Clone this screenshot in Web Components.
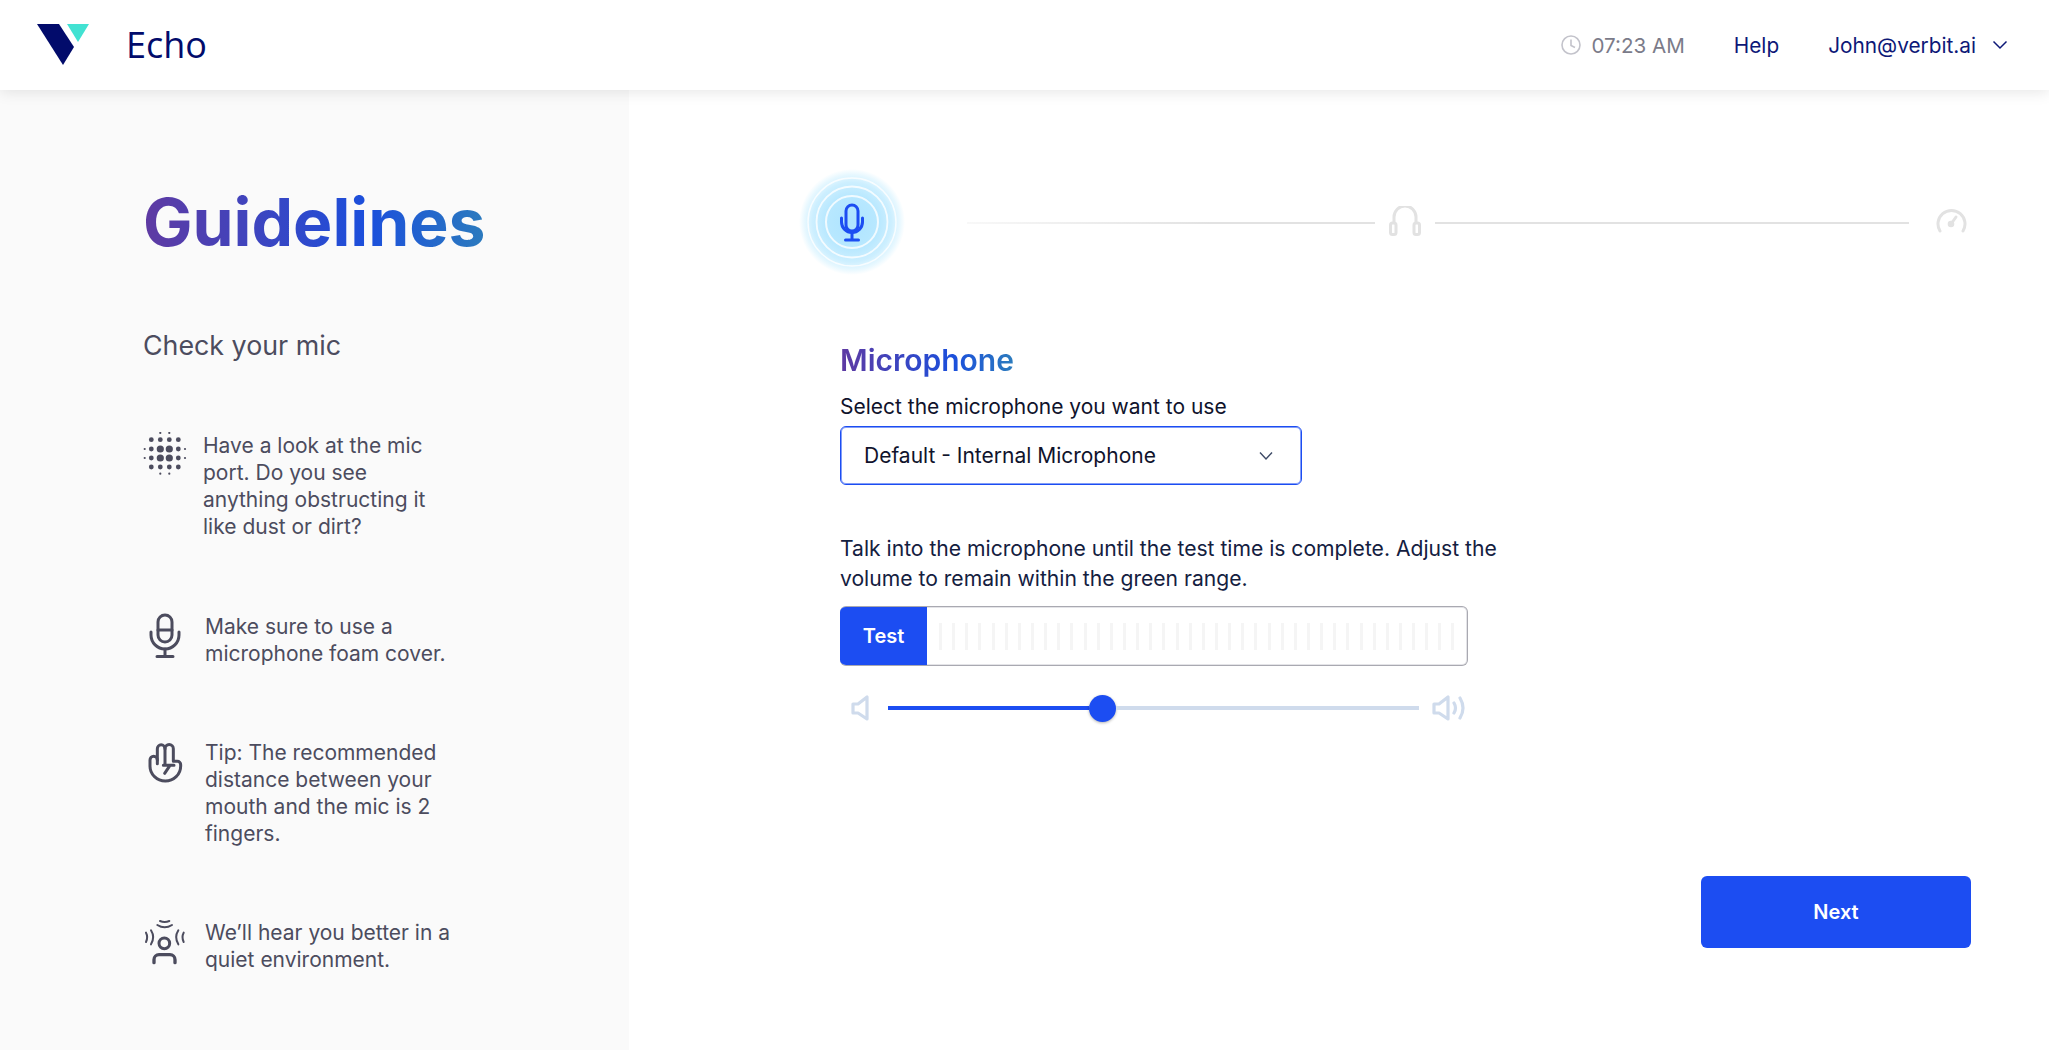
<!DOCTYPE html>
<html lang="en">
<head>
<meta charset="utf-8">
<title>Echo</title>
<style>
html, body { margin: 0; height: 100%; }
body { font-family: Inter, "Liberation Sans", sans-serif; background: #fff; overflow: hidden; }
.main { display: flex; height: 960px; }
</style>
</head>
<body>
<app-header></app-header>
<div class="main">
  <guide-sidebar>
    <guide-item text-left="60">
      <svg slot="icon" width="48" height="48" viewBox="0 0 48 48" fill="#4c4c5e">
        <circle cx="17.3" cy="1" r="1.1"/><circle cx="26.3" cy="1" r="1.1"/>
        <circle cx="8.3" cy="7.7" r="2.4"/><circle cx="17.3" cy="7.7" r="2.4"/><circle cx="26.3" cy="7.7" r="2.4"/><circle cx="35.3" cy="7.7" r="2.4"/>
        <circle cx="1.7" cy="17" r="1.1"/><circle cx="8.3" cy="17" r="2.4"/><circle cx="17.3" cy="17" r="3.6"/><circle cx="26.3" cy="17" r="3.6"/><circle cx="35.3" cy="17" r="2.4"/><circle cx="42" cy="17" r="1.1"/>
        <circle cx="1.7" cy="26" r="1.1"/><circle cx="8.3" cy="26" r="2.4"/><circle cx="17.3" cy="26" r="3.6"/><circle cx="26.3" cy="26" r="3.6"/><circle cx="35.3" cy="26" r="2.4"/><circle cx="42" cy="26" r="1.1"/>
        <circle cx="8.3" cy="35" r="2.4"/><circle cx="17.3" cy="35" r="2.4"/><circle cx="26.3" cy="35" r="2.4"/><circle cx="35.3" cy="35" r="2.4"/>
        <circle cx="17.3" cy="41.7" r="1.1"/><circle cx="26.3" cy="41.7" r="1.1"/>
      </svg>
      Have a look at the mic port. Do you see anything obstructing it like dust or dirt?
    </guide-item>
    <guide-item style="margin-top:1px">
      <svg slot="icon" width="48" height="48" viewBox="0 0 48 48" fill="none" stroke="#4c4c5e" stroke-width="3" stroke-linecap="round">
        <rect x="15" y="2" width="14" height="27" rx="7"/>
        <path d="M15 17h14"/>
        <path d="M8 19v3a14 14 0 0 0 28 0v-3"/>
        <path d="M22 36v7M14 43.5h16"/>
      </svg>
      Make sure to use a microphone foam cover.
    </guide-item>
    <guide-item>
      <svg slot="icon" width="48" height="48" viewBox="39 21 144 144" fill="none" stroke="#4c4c5e" stroke-width="9" stroke-linecap="round" stroke-linejoin="round">
        <path d="M82 95V50a11.5 11.5 0 0 1 23 0V95"/>
        <path d="M105 50a12.5 12.5 0 0 1 25 0V88H142a10 10 0 0 1 10 10V103a46 44 0 0 1-92 0V84a11 11 0 0 1 22 0"/>
        <path d="M100 100H132M120 100L104 124"/>
      </svg>
      Tip: The recommended distance between your mouth and the mic is 2 fingers.
    </guide-item>
    <guide-item>
      <svg slot="icon" width="48" height="48" viewBox="39 24 144 144" fill="none" stroke="#4c4c5e" stroke-linecap="round">
        <circle cx="103" cy="97" r="16" stroke-width="9"/>
        <path d="M72 155V146a15 15 0 0 1 15-15H120a15 15 0 0 1 15 15V155" stroke-width="10"/>
        <path d="M90 30q14 6 28 0M82 42q22 14 44 0M48 65q7 13 0 28M63 58q13 21 0 42M145 58q-13 21 0 42M161 65q-7 13 0 28" stroke-width="6"/>
      </svg>
      We’ll hear you better in a quiet environment.
    </guide-item>
  </guide-sidebar>
  <mic-panel></mic-panel>
</div>

<script>
var gradient = "linear-gradient(90deg, #5f3aa2 0%, #1b4fdc 65%, #2c7cbd 100%)";

//HEADER
var template_header = document.createElement("template");
template_header.innerHTML = `
<style>
:host{
    display: flex;
    align-items: center;
    height: 90px;
    background: #fff;
    box-shadow: 0 2px 14px rgba(0,0,0,.1);
    position: relative;
    z-index: 2;
    padding: 0 41px 0 37px;
    font-size: 20.8px;
}
.logo{ display: block; margin-right: 37px; margin-bottom: 1px; }
.name{ font-family: "Open Sans", sans-serif; font-size: 36px; color: #020b6b; flex: 1; margin-bottom: 2px; }
.time{ color: #7b7b89; display: flex; align-items: center; gap: 10px; margin-right: 49px; font-size: 20.6px; }
a{ color: #0d1877; text-decoration: none; }
.help{ margin-right: 49px; }
.chev{ margin-left: 16px; }
</style>
<svg class="logo" width="52" height="41" viewBox="0 0 52 41">
  <path d="M0 0H22L37 23L26 41Z" fill="#020b6b"/>
  <path d="M30 0H52L41 18Z" fill="#42e2d2"/>
</svg>
<span class="name">Echo</span>
<span class="time">
  <svg width="20" height="20" viewBox="0 0 20 20" fill="none" stroke="#c3c3cb" stroke-width="1.6"><circle cx="10" cy="10" r="9"/><path d="M10 4.5V10.5L14 12.5"/></svg>
  07:23 AM
</span>
<a class="help" href="#">Help</a>
<a href="#">John@verbit.ai</a>
<svg class="chev" width="16" height="10" viewBox="0 0 16 10" fill="none" stroke="#0d1877" stroke-width="1.5"><path d="M1.5 1.5L8 8L14.5 1.5"/></svg>
`;
class AppHeader extends HTMLElement {
    constructor(){
        super();
        this.attachShadow({mode:"open"});
    }
    connectedCallback(){
        this.shadowRoot.appendChild(template_header.content.cloneNode(true));
    }
}
customElements.define("app-header", AppHeader);

//SIDEBAR
var template_sidebar = document.createElement("template");
template_sidebar.innerHTML = `
<style>
:host{
    display: block;
    box-sizing: border-box;
    width: 629px;
    flex: none;
    background: #fafafa;
    padding: 88px 0 0 143px;
}
h1{
    margin: 0;
    font-size: 66px;
    line-height: 88px;
    font-weight: 700;
    white-space: nowrap;
    background: ${gradient};
    -webkit-background-clip: text;
    background-clip: text;
    color: transparent;
    width: 345px;
}
h2{
    margin: 61px 0 69px;
    font-size: 26.8px;
    line-height: 36px;
    font-weight: 400;
    color: #4c4c5e;
}
.list{ display: flex; flex-direction: column; gap: 72px; }
</style>
<h1>Guidelines</h1>
<h2>Check your mic</h2>
<div class="list"><slot></slot></div>
`;
class GuideSidebar extends HTMLElement {
    constructor(){
        super();
        this.attachShadow({mode:"open"});
    }
    connectedCallback(){
        this.shadowRoot.appendChild(template_sidebar.content.cloneNode(true));
    }
}
customElements.define("guide-sidebar", GuideSidebar);

//ONE GUIDELINE ROW
var template_item = document.createElement("template");
template_item.innerHTML = `
<style>
:host{
    display: flex;
    font-size: 21px;
    line-height: 27px;
    color: #4c4c5e;
}
.icon{ flex: none; width: 62px; }
.text{ width: 248px; }
</style>
<div class="icon"><slot name="icon"></slot></div>
<div class="text"><slot></slot></div>
`;
class GuideItem extends HTMLElement {
    constructor(){
        super();
        this.attachShadow({mode:"open"});
    }
    connectedCallback(){
        this.shadowRoot.appendChild(template_item.content.cloneNode(true));
        if(this.getAttribute("text-left")){
            this.shadowRoot.querySelector(".icon").style.width = this.getAttribute("text-left") + "px";
        }
    }
}
customElements.define("guide-item", GuideItem);

//RIGHT PANEL
var template_panel = document.createElement("template");
template_panel.innerHTML = `
<style>
:host{
    display: flex;
    flex-direction: column;
    flex: 1;
    box-sizing: border-box;
    padding: 79px 78px 0 170px;
}
.content{ margin: 0 0 0 41px; }
.next{
    align-self: flex-end;
    margin-top: 154px;
}
</style>
<step-progress></step-progress>
<mic-setup class="content"></mic-setup>
<next-button class="next">Next</next-button>
`;
class MicPanel extends HTMLElement {
    constructor(){
        super();
        this.attachShadow({mode:"open"});
    }
    connectedCallback(){
        this.shadowRoot.appendChild(template_panel.content.cloneNode(true));
    }
}
customElements.define("mic-panel", MicPanel);

//STEPS AT THE TOP
var template_steps = document.createElement("template");
template_steps.innerHTML = `
<style>
:host{
    display: flex;
    align-items: center;
    height: 106px;
}
.glow{ display: block; flex: none; margin-right: 62px; }
.line{ height: 2px; background: #e2e2e2; margin-top: 2px; }
.one{ width: 408px; background: linear-gradient(90deg, #f8f8f8 0%, #e2e2e2 60%); }
.two{ width: 474px; }
.head{ display: block; margin: 0 14px 2px; }
.gauge{ display: block; margin: 0 0 4px 27px; }
</style>
<svg class="glow" width="106" height="106" viewBox="0 0 106 106">
  <defs>
    <radialGradient id="g">
      <stop offset="0" stop-color="#aee4ff"/>
      <stop offset=".5" stop-color="#b8e8ff"/>
      <stop offset=".75" stop-color="#cdefff"/>
      <stop offset=".9" stop-color="#e8f8ff"/>
      <stop offset="1" stop-color="#ffffff"/>
    </radialGradient>
  </defs>
  <circle cx="53" cy="53" r="53" fill="url(#g)"/>
  <g fill="none" stroke="#fff" opacity=".8">
    <circle cx="53" cy="53" r="26" stroke-width="2"/>
    <circle cx="53" cy="53" r="35.5" stroke-width="1.8"/>
    <circle cx="53" cy="53" r="44" stroke-width="1.4"/>
  </g>
  <g fill="none" stroke="#1c4df2" stroke-width="3" stroke-linecap="round">
    <rect x="47" y="36" width="12" height="26" rx="6"/>
    <path d="M42.5 49v4a10.5 10.5 0 0 0 21 0v-4"/>
    <path d="M53 64v7M46.5 71h13"/>
  </g>
</svg>
<div class="line one"></div>
<svg class="head" width="32" height="30" viewBox="0 0 32 30" fill="none" stroke="#e2e2e2" stroke-width="3">
  <path d="M5 18V11a11 11 0 0 1 22 0v7"/>
  <rect x="1.5" y="17" width="5.5" height="11.5" rx="2"/>
  <rect x="25" y="17" width="5.5" height="11.5" rx="2"/>
</svg>
<div class="line two"></div>
<svg class="gauge" width="31" height="28" viewBox="0 0 31 28" fill="none" stroke="#e2e2e2" stroke-width="3" stroke-linecap="round">
  <path d="M4 25a13.5 13.5 0 1 1 23 0"/>
  <path d="M15 18L20 11" stroke-width="3"/>
  <circle cx="15" cy="18" r="1.8" fill="#e2e2e2"/>
</svg>
`;
class StepProgress extends HTMLElement {
    constructor(){
        super();
        this.attachShadow({mode:"open"});
    }
    connectedCallback(){
        this.shadowRoot.appendChild(template_steps.content.cloneNode(true));
    }
}
customElements.define("step-progress", StepProgress);

//MICROPHONE FORM
var template_setup = document.createElement("template");
template_setup.innerHTML = `
<style>
:host{
    display: block;
    padding-top: 66px;
    color: #10132c;
    font-size: 21px;
}
h3{
    margin: 0;
    font-size: 30px;
    line-height: 38px;
    font-weight: 600;
    background: ${gradient};
    -webkit-background-clip: text;
    background-clip: text;
    color: transparent;
    width: 174px;
}
.label{ line-height: 30px; margin-top: 13px; }
.select{
    box-sizing: border-box;
    width: 462px;
    height: 59px;
    margin-top: 4px;
    border: 1px solid #1c4df2;
    box-shadow: inset 0 0 0 1px rgba(28,77,242,.55);
    border-radius: 6px;
    display: flex;
    align-items: center;
    justify-content: space-between;
    padding: 0 27px 0 23px;
}
.info{ width: 680px; line-height: 30px; margin-top: 49px; color: #14203f; font-size: 21.12px; }
.test{
    box-sizing: border-box;
    display: flex;
    width: 628px;
    height: 60px;
    margin-top: 12px;
    border: 1px solid #a9a9b1;
    box-shadow: inset 0 0 0 1px #e4e4e8;
    border-left: 0;
    border-radius: 6px;
    overflow: hidden;
}
.btn{
    flex: none;
    width: 87px;
    margin: -1px 0;
    background: #1c4df2;
    color: #fff;
    font-size: 20px;
    font-weight: 600;
    display: flex;
    align-items: center;
    justify-content: center;
}
.bars{
    display: flex;
    align-items: center;
    gap: 10.15px;
    padding-left: 12px;
}
.bars i{ display: block; width: 3px; height: 27px; background: #f5f5f5; flex: none; }
.slider{
    display: flex;
    align-items: center;
    width: 628px;
    height: 28px;
    margin-top: 28px;
}
.spk-l{ display: block; margin-left: 11px; margin-right: 18px; }
.spk-r{ display: block; margin-left: 13px; }
.fill{ width: 201px; height: 4.5px; background: #1c4df2; }
.rest{ width: 303px; height: 4.5px; background: #cfdbec; }
.thumb{ width: 27px; height: 27px; flex: none; border-radius: 50%; background: #1c4df2; box-shadow: 0 1px 3px rgba(0,0,0,.3); }
</style>
<h3>Microphone</h3>
<div class="label">Select the microphone you want to use</div>
<div class="select">
  <span>Default - Internal Microphone</span>
  <svg width="16" height="10" viewBox="0 0 16 10" fill="none" stroke="#3d4a66" stroke-width="1.4"><path d="M2 1.5L8 8L14 1.5"/></svg>
</div>
<div class="info">Talk into the microphone until the test time is complete. Adjust the volume to remain within the green range.</div>
<div class="test">
  <div class="btn">Test</div>
  <div class="bars"></div>
</div>
<div class="slider">
  <svg class="spk-l" width="19" height="26" viewBox="0 0 19 26" fill="none" stroke="#cfdbec" stroke-width="3.2" stroke-linejoin="round"><path d="M2 9H7L16 2V24L7 18H2Z"/></svg>
  <div class="fill"></div>
  <div class="thumb"></div>
  <div class="rest"></div>
  <svg class="spk-r" width="34" height="26" viewBox="0 0 34 26" fill="none" stroke="#cfdbec" stroke-width="3.2" stroke-linejoin="round" stroke-linecap="round"><path d="M2 9H7L16 2V24L7 18H2Z"/><path d="M22 8q3 5 0 10M28 3q6 10 0 20"/></svg>
</div>
`;
class MicSetup extends HTMLElement {
    constructor(){
        super();
        this.attachShadow({mode:"open"});
    }
    connectedCallback(){
        this.shadowRoot.appendChild(template_setup.content.cloneNode(true));
        var bars = this.shadowRoot.querySelector(".bars");
        for(var i = 0; i < 40; i++){
            bars.appendChild(document.createElement("i"));
        }
    }
}
customElements.define("mic-setup", MicSetup);

//NEXT BUTTON
var template_next = document.createElement("template");
template_next.innerHTML = `
<style>
:host{
    display: flex;
    align-items: center;
    justify-content: center;
    width: 270px;
    height: 72px;
    background: #1c4df2;
    border-radius: 6px;
    color: #fff;
    font-size: 20px;
    font-weight: 600;
}
</style>
<slot></slot>
`;
class NextButton extends HTMLElement {
    constructor(){
        super();
        this.attachShadow({mode:"open"});
    }
    connectedCallback(){
        this.shadowRoot.appendChild(template_next.content.cloneNode(true));
    }
}
customElements.define("next-button", NextButton);
</script>
</body>
</html>
